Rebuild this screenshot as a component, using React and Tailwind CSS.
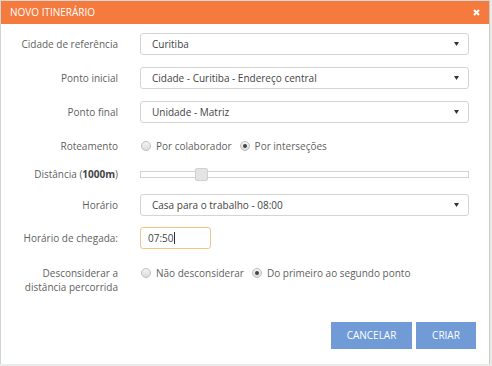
import React from 'react';

const Caret = () => (
  <svg className="w-[5px] h-[4px] shrink-0" viewBox="0 0 5 4">
    <path d="M0 0h5L2.5 4z" fill="#333" />
  </svg>
);

const Select = ({ value }) => (
  <div className="flex items-center justify-between w-[329px] h-[22px] pl-[11px] pr-[9px] bg-white border border-[#d4d4d4] rounded-[3px] text-[#444]">
    <span>{value}</span>
    <Caret />
  </div>
);

const Radio = ({ checked, label }) => (
  <label className="flex items-center gap-[5px]">
    <span className="w-[10px] h-[10px] rounded-full border border-[#bdbdbd] bg-gradient-to-b from-[#f4f4f4] to-[#dcdcdc] flex items-center justify-center">
      {checked && <span className="w-[4px] h-[4px] rounded-full bg-[#444]" />}
    </span>
    <span>{label}</span>
  </label>
);

const Row = ({ label, className = '', children }) => (
  <div className={`flex items-center ${className}`}>
    <div className="w-[117px] text-right shrink-0">{label}</div>
    <div className="ml-[22px] flex items-center">{children}</div>
  </div>
);

export default function App() {
  return (
    <div
      className="w-[492px] h-[366px] bg-[#e9ebe9] text-[10px] text-[#5f5f5f] overflow-hidden"
      style={{ fontFamily: '"Open Sans", "Liberation Sans", sans-serif' }}
    >
      <div className="w-[490px] h-[364px] bg-white border-l border-[#cfd6cf] border-r border-r-[#c9c9c9] border-t border-t-[#d8d8d8]">
        {/* Header */}
        <div className="h-[23px] bg-[#f47a3e] flex items-center justify-between pl-[9px] pr-[9px] text-white">
          <span className="text-[10px]">NOVO ITINERÁRIO</span>
          <svg className="w-[7px] h-[7px]" viewBox="0 0 7 7">
            <path d="M1 1l5 5M6 1L1 6" stroke="#fff" strokeWidth="2" />
          </svg>
        </div>

        <Row label="Cidade de referência" className="mt-[9px] h-[22px]">
          <Select value="Curitiba" />
        </Row>
        <Row label="Ponto inicial" className="mt-[12px] h-[22px]">
          <Select value="Cidade - Curitiba - Endereço central" />
        </Row>
        <Row label="Ponto final" className="mt-[12px] h-[22px]">
          <Select value="Unidade - Matriz" />
        </Row>
        <Row label="Roteamento" className="mt-[12px] h-[22px]">
          <div className="flex items-center gap-[8px] pl-[1px]">
            <Radio label="Por colaborador" />
            <Radio checked label="Por interseções" />
          </div>
        </Row>
        <Row
          label={
            <>
              Distância (<b className="text-[#444]">1000m</b>)
            </>
          }
          className="mt-[6px] h-[22px]"
        >
          <div className="relative w-[329px] h-[7px] bg-white border border-[#d4d4d4]">
            <div className="absolute left-[54px] top-[-4px] w-[13px] h-[13px] bg-[#e4e4e4] border border-[#d0d0d0] rounded-[2px]" />
          </div>
        </Row>
        <Row label="Horário" className="mt-[9px] h-[22px]">
          <Select value="Casa para o trabalho - 08:00" />
        </Row>
        <Row label="Horário de chegada:" className="mt-[11px] h-[22px]">
          <div className="w-[71px] h-[22px] border border-[#f3c48c] rounded-[3px] pl-[7px] flex items-center text-[#444]">
            07:50<span className="w-px h-[12px] bg-[#333]" />
          </div>
        </Row>
        <div className="flex items-start mt-[17px]">
          <div className="w-[117px] text-right shrink-0 leading-[14px]">
            Desconsiderar a<br />distância percorrida
          </div>
          <div className="ml-[22px] h-[14px] flex items-center gap-[8px] pl-[1px]">
            <Radio label="Não desconsiderar" />
            <Radio checked label="Do primeiro ao segundo ponto" />
          </div>
        </div>

        <div className="flex justify-end gap-[4px] mt-[28px] pr-[13px]">
          <button className="w-[81px] h-[27px] bg-[#719bd6] text-white text-[10px]">CANCELAR</button>
          <button className="w-[60px] h-[27px] bg-[#719bd6] text-white text-[10px]">CRIAR</button>
        </div>
      </div>
    </div>
  );
}
